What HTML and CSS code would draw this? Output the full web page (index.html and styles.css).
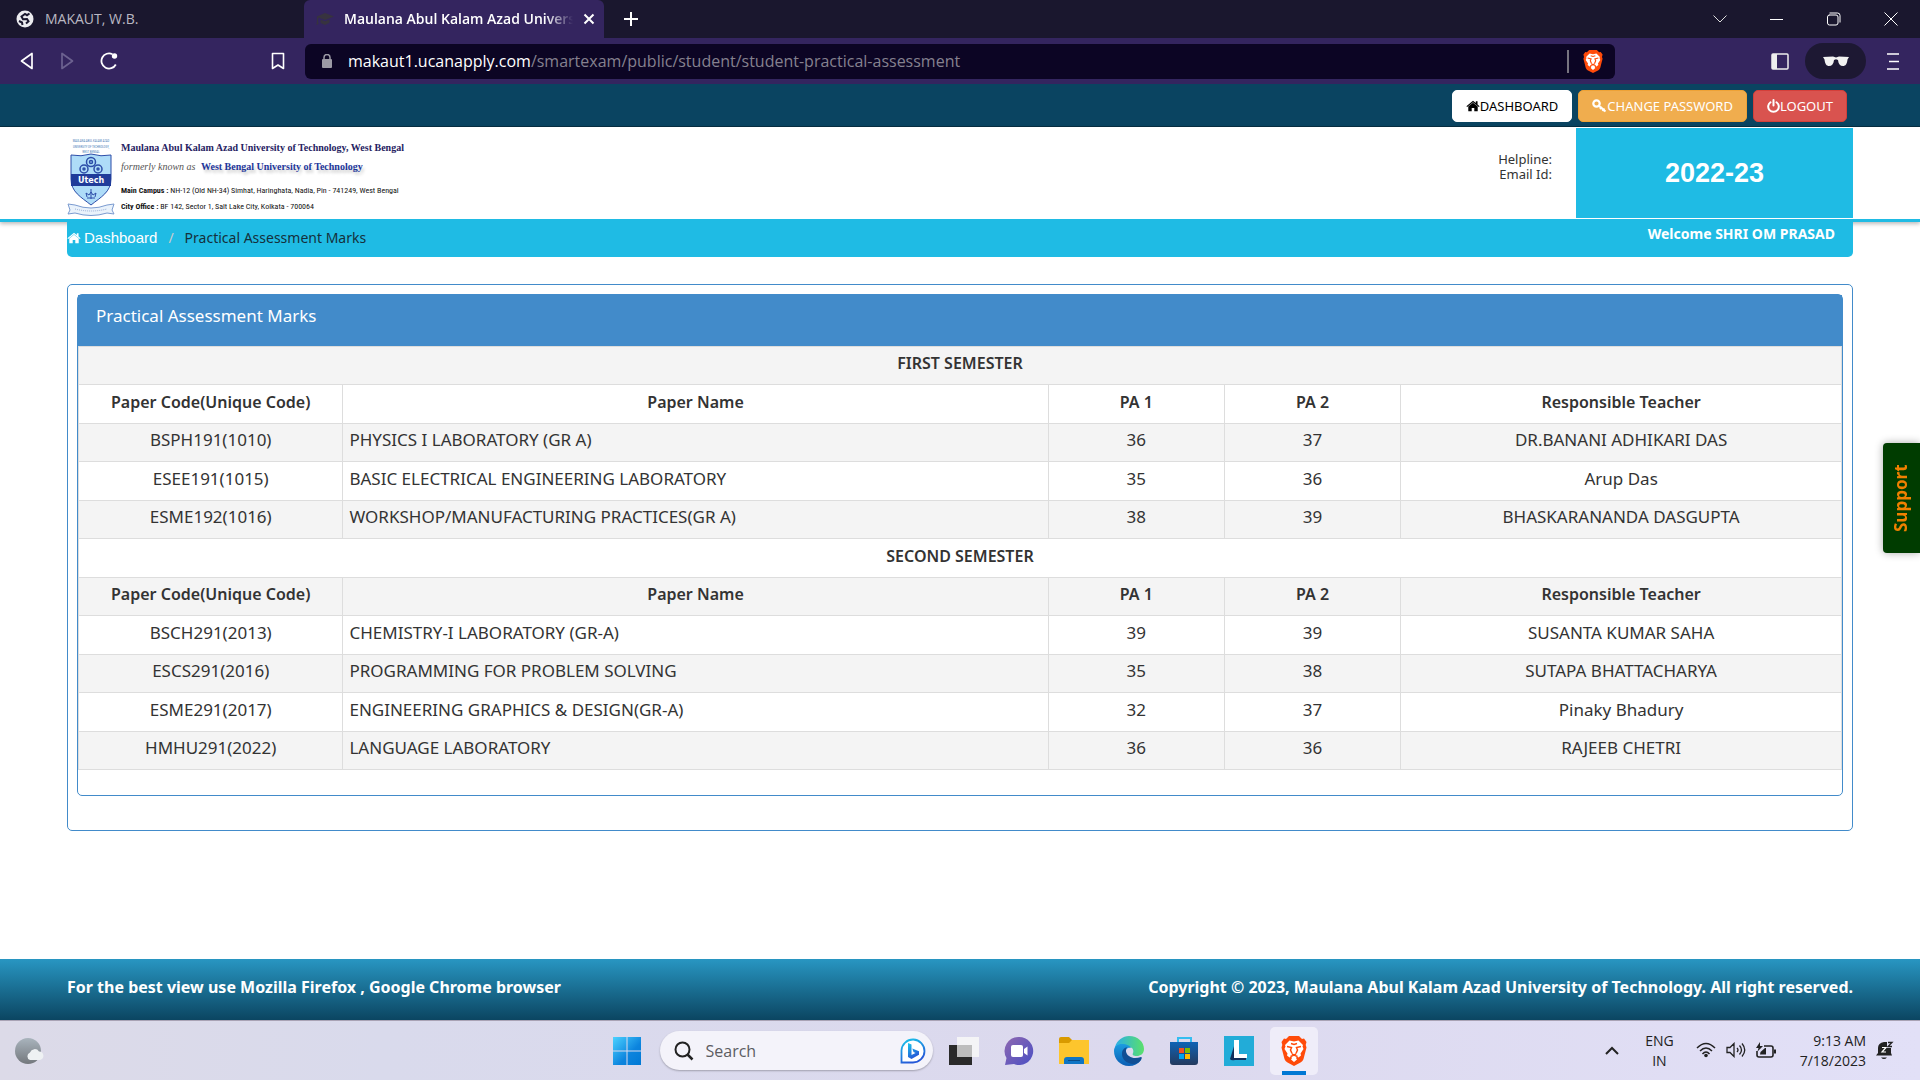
FILE: index.html
```
<!DOCTYPE html>
<html lang="en">
<head>
<meta charset="utf-8">
<meta name="viewport" content="width=device-width, initial-scale=1">
<title>Maulana Abul Kalam Azad University of Technology</title>
<link rel="stylesheet" href="styles.css">
</head>
<body>
<svg class="defs" aria-hidden="true">
  <symbol id="lion" viewBox="0 0 26 30">
    <path fill="#ff4b0a" d="M8 0h10l3 3 2-.4L25.5 6l-.8 3 .8 2.500-3 11.500c-.5 1.600-1.500 2.600-3 3.600L13 30l-6.500-3.400c-1.500-1-2.500-2-3-3.600L.5 11.500 1.300 9 .5 6 3 2.600 5 3z"/>
    <path fill="#fff" d="M8.500 4.500 13 5.500l4.500-1L22 9l-.5 1.500L22.500 13l-3 4.500.5 2-2.500 2-1.500-1-1 1.500 1 1.500L13 26l-3-2.500 1-1.500-1-1.500-1.500 1-2.500-2 .5-2-3-4.500 1-2.500L4 9z"/>
    <path fill="none" stroke="#ff4b0a" stroke-width="1.500" d="M6 10.500l4.500 1-1 2.500 1.500 3.500M20 10.500l-4.500 1 1 2.500-1.500 3.500M10 7.500l3 1 3-1M11 18l2 1.200 2-1.200M9.500 20.500 13 19l3.500 1.500"/>
  </symbol>
  <symbol id="home" viewBox="0 0 16 14">
    <path fill="currentColor" d="M8 3.200 2.500 7.700V13h4V9.200h3V13h4V7.700zM8 .8.300 7.200l.9 1L8 2.600l6.800 5.600.9-1L13.300 5.200V1.500h-2v2z"/>
  </symbol>
</svg>

<header class="browser">
  <div class="tabs">
    <div class="tab">
      <svg width="18" height="18" viewBox="0 0 18 18"><circle cx="9" cy="9" r="8.500" fill="#ececf0"/><path fill="none" stroke="#1a172e" stroke-width="2" d="M13.500 3.500 11 5.200 9 4 5.500 6.500 7 9.200l4-.2 1.500 2.300-2.500 2.200M3 11l3 1.500.5 2.500"/></svg>
      <span>MAKAUT, W.B.</span>
    </div>
    <div class="tab active">
      <svg width="18" height="14" viewBox="0 0 18 14"><path fill="#37333f" d="M9 1 18 4.500 9 8 2.500 5.600 2 8l.5 4-2 1 .5-5L.800 4.600zM4.500 7.500 9 9.300l4.500-1.800v3.300L9 13l-4.500-2z"/></svg>
      <span class="tab-title">Maulana Abul Kalam Azad University</span>
      <button class="plain" aria-label="Close tab"><svg width="12" height="12" viewBox="0 0 12 12"><path stroke="#fff" stroke-width="2" d="m1.500 1.500 9 9m0-9-9 9"/></svg></button>
    </div>
    <button class="plain new-tab" aria-label="New tab"><svg width="16" height="16" viewBox="0 0 16 16"><path stroke="#fff" stroke-width="2" d="M8 1v14M1 8h14"/></svg></button>
    <div class="window-controls">
      <button class="plain" aria-label="Tab search"><svg width="14" height="8" viewBox="0 0 14 8"><path fill="none" stroke="#ddd" d="m.5.5 6.500 6.500L13.500.500"/></svg></button>
      <button class="plain" aria-label="Minimize"><svg width="13" height="13" viewBox="0 0 13 13"><path stroke="#fff" d="M0 6.500h13"/></svg></button>
      <button class="plain" aria-label="Restore"><svg width="14" height="14" viewBox="0 0 14 14"><path fill="none" stroke="#fff" d="M2 3h7q2 0 2 2v6q0 2-2 2H2.500q-2 0-2-2V5q0-2 2-2M2.500 1h8q2.500 0 2.500 2.500v7"/></svg></button>
      <button class="plain" aria-label="Close"><svg width="14" height="14" viewBox="0 0 14 14"><path stroke="#fff" d="m.5.5 13 13m0-13-13 13"/></svg></button>
    </div>
  </div>
  <div class="toolbar">
    <div class="nav">
      <button class="plain" aria-label="Back"><svg width="14" height="18" viewBox="0 0 14 18"><path fill="none" stroke="#fff" stroke-width="1.700" stroke-linejoin="round" d="M12 1.500v15L1.500 9z"/></svg></button>
      <button class="plain" aria-label="Forward"><svg width="14" height="18" viewBox="0 0 14 18"><path fill="none" stroke="#6c6290" stroke-width="1.700" stroke-linejoin="round" d="M2 1.500v15L12.500 9z"/></svg></button>
      <button class="plain" aria-label="Reload"><svg width="18" height="18" viewBox="0 0 18 18"><path fill="none" stroke="#fff" stroke-width="1.800" d="M12.500 2.200A7.600 7.600 0 1 0 15.800 12.500"/><circle cx="14.500" cy="4" r="2.700" fill="#fff"/></svg></button>
      <button class="plain bookmark" aria-label="Bookmark"><svg width="14" height="18" viewBox="0 0 14 18"><path fill="none" stroke="#fff" stroke-width="1.600" stroke-linejoin="round" d="M1.500 1.500h11v15L7 13l-5.500 3.500z"/></svg></button>
    </div>
    <div class="address">
      <svg width="12" height="14" viewBox="0 0 12 14"><path fill="none" stroke="#9c9aa5" stroke-width="1.500" d="M3 6V3.500a3 3 0 0 1 6 0V6"/><rect x="1" y="5" width="10" height="9" rx="1" fill="#9c9aa5"/></svg>
      <div class="url" role="textbox" aria-label="Address"><b>makaut1.ucanapply.com</b>/smartexam/public/student/student-practical-assessment</div>
      <button class="plain shield" aria-label="Brave Shields"><svg width="20" height="23"><use href="#lion"/></svg></button>
    </div>
    <div class="tools">
      <button class="plain" aria-label="Sidebar"><svg width="18" height="17" viewBox="0 0 18 17"><rect x="1" y="1" width="16" height="15" rx="1" fill="none" stroke="#eee" stroke-width="1.500"/><path fill="#eee" d="M1 1h5v15H1z"/></svg></button>
      <button class="plain private" aria-label="Private window"><svg width="26" height="11" viewBox="0 0 26 11"><path fill="#f2f2f2" d="M0 1 10 .500l3 1 3-1L26 1l-1.500 2.500C24 8 22.500 10 20 10c-3 0-4.500-2-5-6l-2-.8L11 4c-.5 4-2 6-5 6-2.500 0-4-2-4.500-6.500z"/></svg></button>
      <button class="plain" aria-label="Menu"><svg width="12" height="17" viewBox="0 0 12 17"><path stroke="#fff" stroke-width="1.700" d="M0 1h12M2 8.500h10M0 16h12"/></svg></button>
    </div>
  </div>
</header>

<nav class="topbar">
  <button class="btn btn-white"><svg width="14" height="12"><use href="#home"/></svg>DASHBOARD</button>
  <button class="btn btn-orange"><svg width="15" height="14" viewBox="0 0 15 14"><circle cx="4.500" cy="4.500" r="3.200" fill="none" stroke="currentColor" stroke-width="2.200"/><path fill="none" stroke="currentColor" stroke-width="2" d="m6.500 6.500 7 6M10.500 12l2-2.500M8 10l2-2.200"/></svg>CHANGE PASSWORD</button>
  <button class="btn btn-red"><svg width="13" height="14" viewBox="0 0 13 14"><path fill="none" stroke="currentColor" stroke-width="2" stroke-linecap="round" d="M3.500 3.200a5.300 5.300 0 1 0 6 0M6.500 1v5.500"/></svg>LOGOUT</button>
</nav>

<div class="masthead">
  <div class="wrap masthead-row">
    <div class="brand">
      <svg class="crest" width="48" height="80" viewBox="0 0 48 80">
        <g fill="#4a7db8" font-family="Roboto Condensed, Roboto, sans-serif" font-size="3" text-anchor="middle"><text x="24" y="5">MAULANA ABUL KALAM AZAD</text><text x="24" y="11">UNIVERSITY OF TECHNOLOGY,</text><text x="24" y="16">WEST BENGAL</text></g>
        <path fill="#aedcf8" stroke="#2c4da8" d="M4 18q10 2 20-1 10 3 20 1v24c0 13-10 18-20 26C14 60 4 55 4 42z"/>
        <path fill="#203c9a" d="M4 37h40v12H4z"/>
        <g fill="none" stroke="#2c4da8" stroke-width="1.500"><circle cx="24" cy="25" r="4.500"/><circle cx="17" cy="32" r="4"/><circle cx="31" cy="32" r="4"/><circle cx="24" cy="25" r="1.500"/><circle cx="17" cy="32" r="1"/><circle cx="31" cy="32" r="1"/><path stroke-width="1" d="M24 52v10M20 61h8M20 60l-1-4 3 2 2-3 2 3 3-2-1 4"/></g>
        <text x="24" y="46" fill="#fff" font-family="DejaVu Sans" font-weight="700" font-size="8" text-anchor="middle">Utech</text>
        <path fill="#e9f2fb" stroke="#7b9bd0" d="M1 67l7 1q16 6 32 0l7-1-2 6 2 4-7-1q-16 5-32 0l-7 1 2-4z"/>
        <path fill="none" stroke="#93a9d4" stroke-dasharray="1 1" d="M8 72q16 4 32 0"/>
      </svg>
      <div class="brand-text">
        <p class="uni">Maulana Abul Kalam Azad University of Technology, West Bengal</p>
        <p class="former"><i>formerly known as</i> <b>West Bengal University of Technology</b></p>
        <p class="addr"><b>Main Campus :</b> NH-12 (Old NH-34) Simhat, Haringhata, Nadia, Pin - 741249, West Bengal</p>
        <p class="addr"><b>City Office :</b> BF 142, Sector 1, Salt Lake City, Kolkata - 700064</p>
      </div>
    </div>
    <div class="contact">Helpline:<br>Email Id:</div>
    <div class="session">2022-23</div>
  </div>
</div>

<main class="wrap">
  <div class="breadcrumb">
    <a href="#"><svg width="14" height="12"><use href="#home"/></svg>Dashboard</a><span class="slash">/</span><span>Practical Assessment Marks</span>
    <strong>Welcome SHRI OM PRASAD</strong>
  </div>
  <section class="outer-panel">
    <div class="panel">
      <h1>Practical Assessment Marks</h1>
      <table>
        <colgroup><col class="c15"><col class="c40"><col class="c10"><col class="c10"><col class="c25"></colgroup>
        <tbody>
          <tr><th colspan="5">FIRST SEMESTER</th></tr>
          <tr><th>Paper Code(Unique Code)</th><th>Paper Name</th><th>PA 1</th><th>PA 2</th><th>Responsible Teacher</th></tr>
          <tr><td>BSPH191(1010)</td><td>PHYSICS I LABORATORY (GR A)</td><td>36</td><td>37</td><td>DR.BANANI ADHIKARI DAS</td></tr>
          <tr><td>ESEE191(1015)</td><td>BASIC ELECTRICAL ENGINEERING LABORATORY</td><td>35</td><td>36</td><td>Arup Das</td></tr>
          <tr><td>ESME192(1016)</td><td>WORKSHOP/MANUFACTURING PRACTICES(GR A)</td><td>38</td><td>39</td><td>BHASKARANANDA DASGUPTA</td></tr>
          <tr><th colspan="5">SECOND SEMESTER</th></tr>
          <tr><th>Paper Code(Unique Code)</th><th>Paper Name</th><th>PA 1</th><th>PA 2</th><th>Responsible Teacher</th></tr>
          <tr><td>BSCH291(2013)</td><td>CHEMISTRY-I LABORATORY (GR-A)</td><td>39</td><td>39</td><td>SUSANTA KUMAR SAHA</td></tr>
          <tr><td>ESCS291(2016)</td><td>PROGRAMMING FOR PROBLEM SOLVING</td><td>35</td><td>38</td><td>SUTAPA BHATTACHARYA</td></tr>
          <tr><td>ESME291(2017)</td><td>ENGINEERING GRAPHICS &amp; DESIGN(GR-A)</td><td>32</td><td>37</td><td>Pinaky Bhadury</td></tr>
          <tr><td>HMHU291(2022)</td><td>LANGUAGE LABORATORY</td><td>36</td><td>36</td><td>RAJEEB CHETRI</td></tr>
        </tbody>
      </table>
    </div>
  </section>
</main>

<button class="support">Support</button>

<footer class="wrap footer">
  <span>For the best view use Mozilla Firefox , Google Chrome browser</span>
  <span>Copyright © 2023, Maulana Abul Kalam Azad University of Technology. All right reserved.</span>
</footer>

<div class="taskbar">
  <div class="weather">
    <svg width="30" height="28" viewBox="0 0 30 28"><defs><linearGradient id="moon" x2="0" y2="1"><stop stop-color="#a9b4bd"/><stop offset="1" stop-color="#74787d"/></linearGradient></defs><circle cx="13" cy="14" r="13" fill="url(#moon)"/><path fill="#eef1f3" d="M15 23a4 4 0 0 1 0-7.500 5 5 0 0 1 9-1 4.300 4.300 0 0 1 1 8.500z"/></svg>
  </div>
  <div class="apps">
    <button class="app" aria-label="Start"><svg width="30" height="30" viewBox="0 0 30 30"><defs><linearGradient id="win" x2="1" y2="1"><stop stop-color="#4cd2ff"/><stop offset=".6" stop-color="#0c84de"/><stop offset="1" stop-color="#0078d4"/></linearGradient></defs><path fill="url(#win)" d="M1 1h13.500v13.500H1zM15.500 1H29v13.500H15.500zM1 15.500h13.500V29H1zM15.500 15.500H29V29H15.500z"/></svg></button>
    <label class="search">
      <svg width="20" height="20" viewBox="0 0 20 20"><circle cx="8.500" cy="8.500" r="7" fill="none" stroke="#222" stroke-width="2"/><path stroke="#222" stroke-width="2.500" d="m13.500 13.500 5 5"/></svg>
      <input type="search" placeholder="Search" aria-label="Search">
      <svg width="26" height="26" viewBox="0 0 26 26"><defs><linearGradient id="bing" x2=".4" y2="1"><stop stop-color="#19c6ea"/><stop offset="1" stop-color="#2558d8"/></linearGradient></defs><path fill="#fff" stroke="url(#bing)" stroke-width="1.800" d="M1.500 24.500V12.500A11.500 11.500 0 1 1 13 24.500z"/><path fill="url(#bing)" d="m8 5 3.500 1.500V17l4-2-2-1-1.200-3.500 6.700 2.700v3.500L11.500 21 8 19z"/></svg>
    </label>
    <button class="app" aria-label="Task view"><svg width="30" height="28" viewBox="0 0 30 28"><path fill="#2a2a2a" d="M0 8h23v20H0z"/><path fill="#f4f4f6" d="M8 0h22v20H8z"/><path fill="#bdbdbd" d="M8 8h15v12H8z"/></svg></button>
    <button class="app" aria-label="Chat"><svg width="30" height="30" viewBox="0 0 30 30"><defs><linearGradient id="chat" x2="1" y2="1"><stop stop-color="#8f68b0"/><stop offset="1" stop-color="#4a4fc4"/></linearGradient></defs><path fill="url(#chat)" d="M15 1a14 14 0 1 1-5 27l-9 1 1.500-7A14 14 0 0 1 15 1"/><rect x="7" y="9" width="12" height="12" rx="2" fill="#fff"/><path fill="#fff" d="m20 13 3.500-2.500v9L20 17z"/></svg></button>
    <button class="app" aria-label="File Explorer"><svg width="30" height="28" viewBox="0 0 30 28"><path fill="#d99a00" d="M0 2q0-2 2-2h8l3 3v6H0z"/><path fill="#fdc52d" d="M0 6h10l3-3h17v24H0z"/><path fill="#0f75c5" d="M5 27v-4q0-3 3-3h14q3 0 3 3v4z"/><path fill="#0a4c87" d="M9 23h12v1H9z"/></svg></button>
    <button class="app" aria-label="Edge"><svg width="30" height="30" viewBox="0 0 30 30"><defs><linearGradient id="ea" x2="1"><stop stop-color="#2aaee8"/><stop offset="1" stop-color="#5be06a"/></linearGradient><linearGradient id="eb" x2="0" y2="1"><stop stop-color="#1c9ce0"/><stop offset="1" stop-color="#0b5eb4"/></linearGradient></defs><path fill="url(#ea)" d="M1 11C3 4 9 0 15 0c9 0 15 6 15 13 0 5-4 7-7 7-4 0-5-1-4-3s0-6-4-6z"/><path fill="url(#eb)" d="M0 15C0 10 4 8 8 8c5 0 8 2 9 4-4-1-6 2-5 6 1 5 6 8 11 7 2 0 3-1 4-1-3 4-7 6-12 6C6 30 0 23 0 15"/><path fill="#114f94" d="M8 18c0-4 2-6 5-7-2 3-1 7 2 9 4 3 8 2 12 1 1 0 1 1 0 3-3 4-8 5-12 3-4-1-7-5-7-9"/></svg></button>
    <button class="app" aria-label="Store"><svg width="30" height="30" viewBox="0 0 30 30"><defs><linearGradient id="st" x2="0" y2="1"><stop stop-color="#0f63b5"/><stop offset="1" stop-color="#243a5e"/></linearGradient></defs><path fill="none" stroke="#35bdf0" stroke-width="2" d="M9 6V2h13v4"/><path fill="url(#st)" d="M1 6h28v20q0 3-3 3H4q-3 0-3-3z"/><path fill="#f25022" d="M10 12h5v5h-5z"/><path fill="#7fba00" d="M16 12h5v5h-5z"/><path fill="#00a4ef" d="M10 18h5v5h-5z"/><path fill="#ffb900" d="M16 18h5v5h-5z"/></svg></button>
    <button class="app" aria-label="L"><svg width="30" height="30" viewBox="0 0 30 30"><path fill="#22acd8" d="M0 0h30v30H0z"/><path fill="#12305c" d="m11 7-5 16q1 2 5 1h11v-3H11z"/><path fill="#fff" d="M10 4h5v14h8v4H10z"/></svg></button>
    <button class="app current" aria-label="Brave"><svg width="26" height="30"><use href="#lion"/></svg></button>
  </div>
  <div class="tray">
    <button class="plain" aria-label="Hidden icons"><svg width="14" height="9" viewBox="0 0 14 9"><path fill="none" stroke="#222" stroke-width="2" d="m1 8 6-6 6 6"/></svg></button>
    <div class="lang">ENG<br>IN</div>
    <div class="status">
      <svg width="20" height="16" viewBox="0 0 20 16"><path fill="none" stroke="#222" stroke-width="1.500" d="M1 6q9-9 18 0M4 9q6-6 12 0M6.500 12q3.500-4 7 0"/><circle cx="10" cy="13.500" r="1.800" fill="#222"/></svg>
      <svg width="20" height="16" viewBox="0 0 20 16"><path fill="none" stroke="#222" stroke-width="1.300" d="M1 5.500h3L8 1.500v13l-4-4H1zM11 6q2 2 0 4M13.500 3.500q4 4.500 0 9M16 1.500q5.500 6.500 0 13"/></svg>
      <svg width="20" height="17" viewBox="0 0 20 17"><path fill="none" stroke="#222" stroke-width="1.600" d="M8 4h7q2 0 2 2v7q0 2-2 2H3q-2 0-2-2V9"/><path fill="#222" d="M4 12.500 4.500 10 9 6h1v6.500zM18 7.500h2v4h-2zM4 0 0 6h2.500L1.500 9.500 7 4H4z"/></svg>
    </div>
    <div class="clock">9:13 AM<br>7/18/2023</div>
    <svg width="18" height="19" viewBox="0 0 18 19"><path fill="#222" d="M0 14.500 2 12V7q0-5 6-6l3 0v6h4v5l1 2.500zM5 16.500h6q-3 3-6 0"/><path fill="none" stroke="#222" stroke-width="1.300" d="M12 1.500h4l-4 4h4"/><path fill="none" stroke="#fff" stroke-width="1.200" d="M6 6.500h4l-4 4.500h4"/></svg>
  </div>
</div>
</body>
</html>
```
FILE: styles.css
```
* { box-sizing: border-box; }

body {
  margin: 0;
  min-height: 100vh;
  display: flex;
  flex-direction: column;
  background: #fff;
  color: #333;
  font: 17px/22px "Noto Sans", sans-serif;
}

p, h1 { margin: 0; }
svg { display: block; flex: none; }
button { font: inherit; cursor: pointer; }
.defs { position: absolute; width: 0; height: 0; }
.plain { display: flex; align-items: center; justify-content: center; padding: 0; border: 0; background: none; }
.wrap { padding-left: 67px; padding-right: 67px; }

/* Browser window */
.browser { font-family: "Open Sans", sans-serif; }
.tabs { display: flex; height: 38px; background: #1a172e; font-size: 14px; color: #b9b7c2; }
.tab { width: 304px; display: flex; align-items: center; gap: 11px; padding: 0 16px; }
.tab.active { width: 300px; gap: 10px; padding: 0 9px 0 12px; border-radius: 6px 6px 0 0; background: #34255f; color: #fff; font-weight: 600; }
.tab-title { flex: 1; overflow: hidden; white-space: nowrap; mask-image: linear-gradient(to right, #000 88%, transparent); }
.new-tab { width: 54px; }
.window-controls { display: flex; margin-left: auto; padding-right: 1px; }
.window-controls button { width: 57px; }

.toolbar { display: flex; align-items: center; height: 46px; background: #34255f; }
.nav { width: 305px; display: flex; gap: 26px; padding: 0 20px; }
.bookmark { margin-left: auto; }
.address { flex: 1; height: 35px; display: flex; align-items: center; gap: 15px; padding: 0 12px 0 16px; border-radius: 6px; background: #0c0524; }
.url { flex: 1; color: #85818f; font-size: 16px; white-space: nowrap; }
.url b { color: #fff; font-weight: 400; }
.shield { padding-left: 14px; border-left: 2px solid #77747f; }
.tools { width: 305px; display: flex; align-items: center; justify-content: flex-end; gap: 16px; padding-right: 21px; }
.private { width: 61px; height: 36px; border-radius: 18px; background: #1d1833; }
.tools .plain:last-child { padding-left: 5px; }

/* Site header */
.topbar { display: flex; justify-content: flex-end; gap: 6px; height: 43px; padding: 6px 73px 4px; border-bottom: 1px solid #072f42; background: #0a4461; }
.btn { display: flex; align-items: center; height: 32px; padding: 0 13px; border: 1px solid; border-radius: 5px; color: #fff; font-size: 13px; }
.btn-white { border-color: #fff; background: #fff; color: #000; }
.btn-orange { border-color: #eea236; background: #f0ad4e; }
.btn-red { border-color: #d43f3a; background: #d9534f; }

.masthead { border-bottom: 3px solid #1fbbe4; box-shadow: 0 2px 4px #0004; }
.masthead-row { display: flex; height: 92px; padding-top: 1px; padding-bottom: 1px; }
.brand { display: flex; gap: 6px; padding-top: 9px; }
.brand-text { color: #111; white-space: nowrap; }
.uni { color: #262262; font: 700 10px/22px "Liberation Serif", serif; }
.former { display: flex; gap: 10px; font: 10px/16px "Liberation Serif", serif; }
.former i { width: 70px; color: #555; }
.former b { color: #22369a; text-shadow: 2px 3px 3px #0003; }
.addr { font: 8px/16px "Roboto Condensed", Roboto, sans-serif; }
.former + .addr { padding-top: 8px; }
.contact { margin-left: auto; padding: 24px 24px 0; font-size: 13px; line-height: 15px; text-align: right; }
.session { width: 277px; display: flex; align-items: center; justify-content: center; background: #1fbbe4; color: #fff; font: 700 27px/30px "Liberation Sans", sans-serif; }

main { flex: 1; position: relative; }
.breadcrumb { display: flex; height: 35px; padding: 5px 18px 0 0; border-radius: 0 0 5px 5px; background: #1fbbe4; color: #15303b; font-size: 14px; }
.breadcrumb a { display: flex; align-items: center; gap: 3px; height: 22px; color: #fff; font: 15px/22px "Liberation Sans", sans-serif; text-decoration: none; }
.slash { padding: 0 11px; color: #ccc; }
.breadcrumb strong { margin-left: auto; color: #fff; line-height: 14px; }

.outer-panel { margin-top: 27px; padding: 9px 9px 34px; border: 1px solid #428bca; border-radius: 5px; }
.panel { padding-bottom: 25px; border: 1px solid #428bca; border-radius: 5px; }
.panel h1 { height: 51px; padding: 10px 18px; background: #428bca; color: #fff; font-size: 17px; font-weight: 400; line-height: 22px; }

table { width: 100%; border-collapse: collapse; table-layout: fixed; text-align: center; }
.c15 { width: 15%; }
.c40 { width: 40%; }
.c10 { width: 10%; }
.c25 { width: 25%; }
th, td { padding: 5px 6px 10px; border: 1px solid #ddd; }
tr:nth-child(odd) { background: #f4f4f4; }
tr:nth-child(even) > * { padding-top: 6px; }
th { font-size: 16px; font-weight: 600; }
td:nth-child(2) { text-align: left; }

.support {
  position: fixed;
  top: 443px;
  right: 0;
  width: 37px;
  height: 110px;
  padding: 0;
  border: 0;
  border-radius: 0 4px 4px 0;
  background: #003c00;
  box-shadow: 0 0 8px #0005;
  color: #f08000;
  font-size: 17px;
  font-weight: 700;
  writing-mode: vertical-rl;
  transform: rotate(180deg);
}

.footer { display: flex; justify-content: space-between; padding-top: 17px; padding-bottom: 22px; background: linear-gradient(#2896c2, #0b4561); color: #fff; font-size: 16px; font-weight: 700; }

/* Desktop taskbar */
.taskbar { display: grid; grid-template-columns: 1fr auto 1fr; align-items: center; height: 60px; border-top: 1px solid #a9a3b5; background: linear-gradient(90deg, #dcdae8, #d9daec 20%, #dcd9ee 60%, #e2e0f7); color: #222; font-family: "Open Sans", sans-serif; }
.weather { padding-left: 15px; }
.apps { display: flex; align-items: center; gap: 7px; }
.app { width: 48px; height: 48px; display: flex; align-items: center; justify-content: center; padding: 0; border: 0; border-radius: 5px; background: none; }
.current { border-bottom: 4px solid #0078d4; background: #efedf9; padding-top: 4px; border-image: linear-gradient(90deg, transparent 30%, #0078d4 30% 70%, transparent 70%) 4; }
.search { width: 273px; height: 39px; display: flex; align-items: center; gap: 12px; margin-left: 2px; padding: 0 7px 0 14px; border-radius: 20px; background: #f4f3fa; box-shadow: 0 1px 2px #0004; }
.search input { flex: 1; min-width: 0; padding: 0; border: 0; outline: 0; background: none; font: inherit; font-size: 16px; }
.search input::placeholder { color: #5c5c62; opacity: 1; }
.tray { display: flex; align-items: center; justify-content: flex-end; padding-right: 26px; font-size: 14px; line-height: 20px; }
.lang { margin: 0 22px 0 26px; text-align: center; }
.status { display: flex; gap: 10px; }
.clock { margin: 0 10px 0 24px; text-align: right; }
```
